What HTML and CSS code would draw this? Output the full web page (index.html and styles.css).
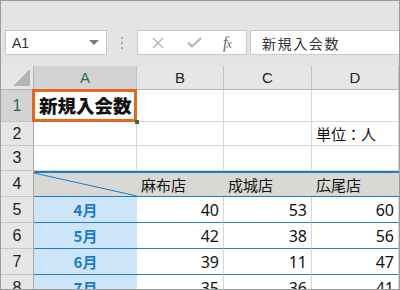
FILE: index.html
```html
<!DOCTYPE html>
<html lang="ja">
<head>
    <meta charset="UTF-8">
    <title>新規入会数</title>
    <link rel="stylesheet" href="styles.css">
</head>
<body>
    <div class="frame">
        <div class="toolbar">
            <div class="name-box">
                <span>A1</span>
                <span class="drop"></span>
            </div>
            <div class="dots"><i></i><i></i><i></i></div>
            <div class="fx-buttons">
                <svg class="btn" width="12" height="12" viewBox="0 0 12 12">
                    <path d="M1 1 L11 11 M11 1 L1 11" stroke="#b4b4b4" stroke-width="1.4" fill="none"/>
                </svg>
                <svg class="btn" width="15" height="11" viewBox="0 0 15 11">
                    <path d="M1 5.5 L5 9.5 L14 1" stroke="#b4b4b4" stroke-width="2.2" fill="none"/>
                </svg>
                <span class="fx">f<sub>x</sub></span>
            </div>
            <div class="formula">新規入会数</div>
        </div>

        <div class="grid">
            <!-- column headers -->
            <div class="corner"><span class="tri"></span></div>
            <div class="col-head selected">A</div>
            <div class="col-head">B</div>
            <div class="col-head">C</div>
            <div class="col-head">D</div>

            <div class="row-head selected">1</div>
            <div class="cell active"><b class="title">新規入会数</b><span class="handle"></span></div>
            <div class="cell"></div>
            <div class="cell"></div>
            <div class="cell"></div>

            <div class="row-head">2</div>
            <div class="cell"></div>
            <div class="cell"></div>
            <div class="cell"></div>
            <div class="cell">単位：人</div>

            <div class="row-head">3</div>
            <div class="cell"></div>
            <div class="cell"></div>
            <div class="cell"></div>
            <div class="cell"></div>

            <div class="row-head">4</div>
            <div class="cell shop diag"></div>
            <div class="cell shop">麻布店</div>
            <div class="cell shop">成城店</div>
            <div class="cell shop">広尾店</div>

            <div class="row-head">5</div>
            <div class="cell month">4月</div>
            <div class="cell num">40</div>
            <div class="cell num">53</div>
            <div class="cell num">60</div>

            <div class="row-head">6</div>
            <div class="cell month">5月</div>
            <div class="cell num">42</div>
            <div class="cell num">38</div>
            <div class="cell num">56</div>

            <div class="row-head">7</div>
            <div class="cell month">6月</div>
            <div class="cell num">39</div>
            <div class="cell num">11</div>
            <div class="cell num">47</div>

            <div class="row-head">8</div>
            <div class="cell month">7月</div>
            <div class="cell num">35</div>
            <div class="cell num">36</div>
            <div class="cell num">41</div>
        </div>
    </div>
</body>
</html>
```

FILE: styles.css
```css
* {
    box-sizing: border-box;
}

body {
    margin: 0;
    font-family: "Noto Sans CJK JP", "Noto Sans", sans-serif;
    color: #111;
}

.frame {
    width: 400px;
    height: 290px;
    border: 1px solid #9c9c9c;
    background-color: #e4e5e2;
    overflow: hidden;
}

/* formula bar */
.toolbar {
    height: 65px;
    padding-top: 29px;
    display: flex;
    align-items: flex-start;
}

.name-box,
.fx-buttons,
.formula {
    height: 25px;
    background-color: #fff;
    border: 1px solid #c8c8c8;
    display: flex;
    align-items: center;
}

.name-box {
    width: 102px;
    margin-left: 4px;
    padding: 0 6px;
    justify-content: space-between;
    font-family: "Liberation Sans", sans-serif;
    font-size: 14px;
    color: #333;
}

.drop {
    width: 0;
    height: 0;
    border-left: 5px solid transparent;
    border-right: 5px solid transparent;
    border-top: 5px solid #7a7a7a;
    margin-right: 1px;
}

.dots {
    width: 30px;
    height: 25px;
    display: flex;
    flex-direction: column;
    align-items: center;
    justify-content: center;
    gap: 3px;
}

.dots i {
    width: 2px;
    height: 2px;
    background-color: #a6a6a6;
}

.fx-buttons {
    width: 110px;
    padding: 0 0 0 14px;
}

.fx-buttons .btn {
    margin-right: 23px;
}

.fx {
    font-family: "Liberation Serif", serif;
    font-style: italic;
    font-size: 16px;
    color: #666;
    line-height: 1;
    margin-left: -2px;
}

.fx sub {
    font-size: 12px;
    vertical-align: 0;
    margin-left: -1px;
}

.formula {
    flex: 1;
    margin-left: 3px;
    margin-right: -3px;
    padding-left: 11px;
    font-size: 14px;
    letter-spacing: 1.6px;
    color: #333;
}

/* sheet */
.grid {
    display: grid;
    grid-template-columns: 33px 103px 87px 88px 1fr;
    grid-template-rows: 24px 32px 24px 25px 26px 26px 26px 26px 26px;
    background-color: #fff;
}

.corner,
.col-head,
.row-head {
    background-color: #e6e6e6;
    border-right: 1px solid #c2c2c2;
    border-bottom: 1px solid #b6b6b6;
    display: flex;
    align-items: center;
    justify-content: center;
    font-family: "Liberation Sans", sans-serif;
    font-size: 15px;
    color: #222;
}

.corner {
    position: relative;
    border-right-color: #b6b6b6;
}

.tri {
    position: absolute;
    right: 3px;
    bottom: 3px;
    width: 0;
    height: 0;
    border-left: 17px solid transparent;
    border-bottom: 17px solid #b4b4b4;
}

.row-head {
    border-right-color: #a8a8a8;
    border-bottom-color: #c6c6c6;
    font-size: 16px;
}

.col-head.selected,
.row-head.selected {
    background-color: #d3d3d3;
    color: #217346;
}

.cell {
    border-right: 1px solid #d6d6d6;
    border-bottom: 1px solid #d6d6d6;
    display: flex;
    align-items: center;
    padding: 0 4px;
    font-size: 15px;
    line-height: 1;
}

.active {
    position: relative;
}

.active::after {
    content: "";
    position: absolute;
    left: -2px;
    top: -1px;
    right: -1px;
    bottom: -1px;
    border: 3px solid #e8651e;
}

.handle {
    position: absolute;
    right: -3px;
    bottom: -3px;
    width: 4px;
    height: 4px;
    background-color: #217346;
    z-index: 1;
}

.title {
    font-size: 18.5px;
    font-weight: 900;
    padding-left: 1px;
}

.shop {
    background-color: #d8d9d5;
    border-top: 2px solid #1a7dc4;
    border-bottom: 1px solid #1a7dc4;
    border-right: none;
}

.diag {
    background: linear-gradient(to top right, #d8d9d5 calc(50% - 1px), #1a7dc4 50%, #d8d9d5 calc(50% + 1px));
}

.month {
    background-color: #cde5f8;
    justify-content: center;
    font-weight: bold;
    color: #1b7bc4;
    border-right: none;
    border-bottom: 1px solid #2d7fba;
}

.num {
    justify-content: flex-end;
    font-family: "Noto Sans", sans-serif;
    font-size: 16px;
    border-bottom: 1px solid #2d7fba;
}
```
